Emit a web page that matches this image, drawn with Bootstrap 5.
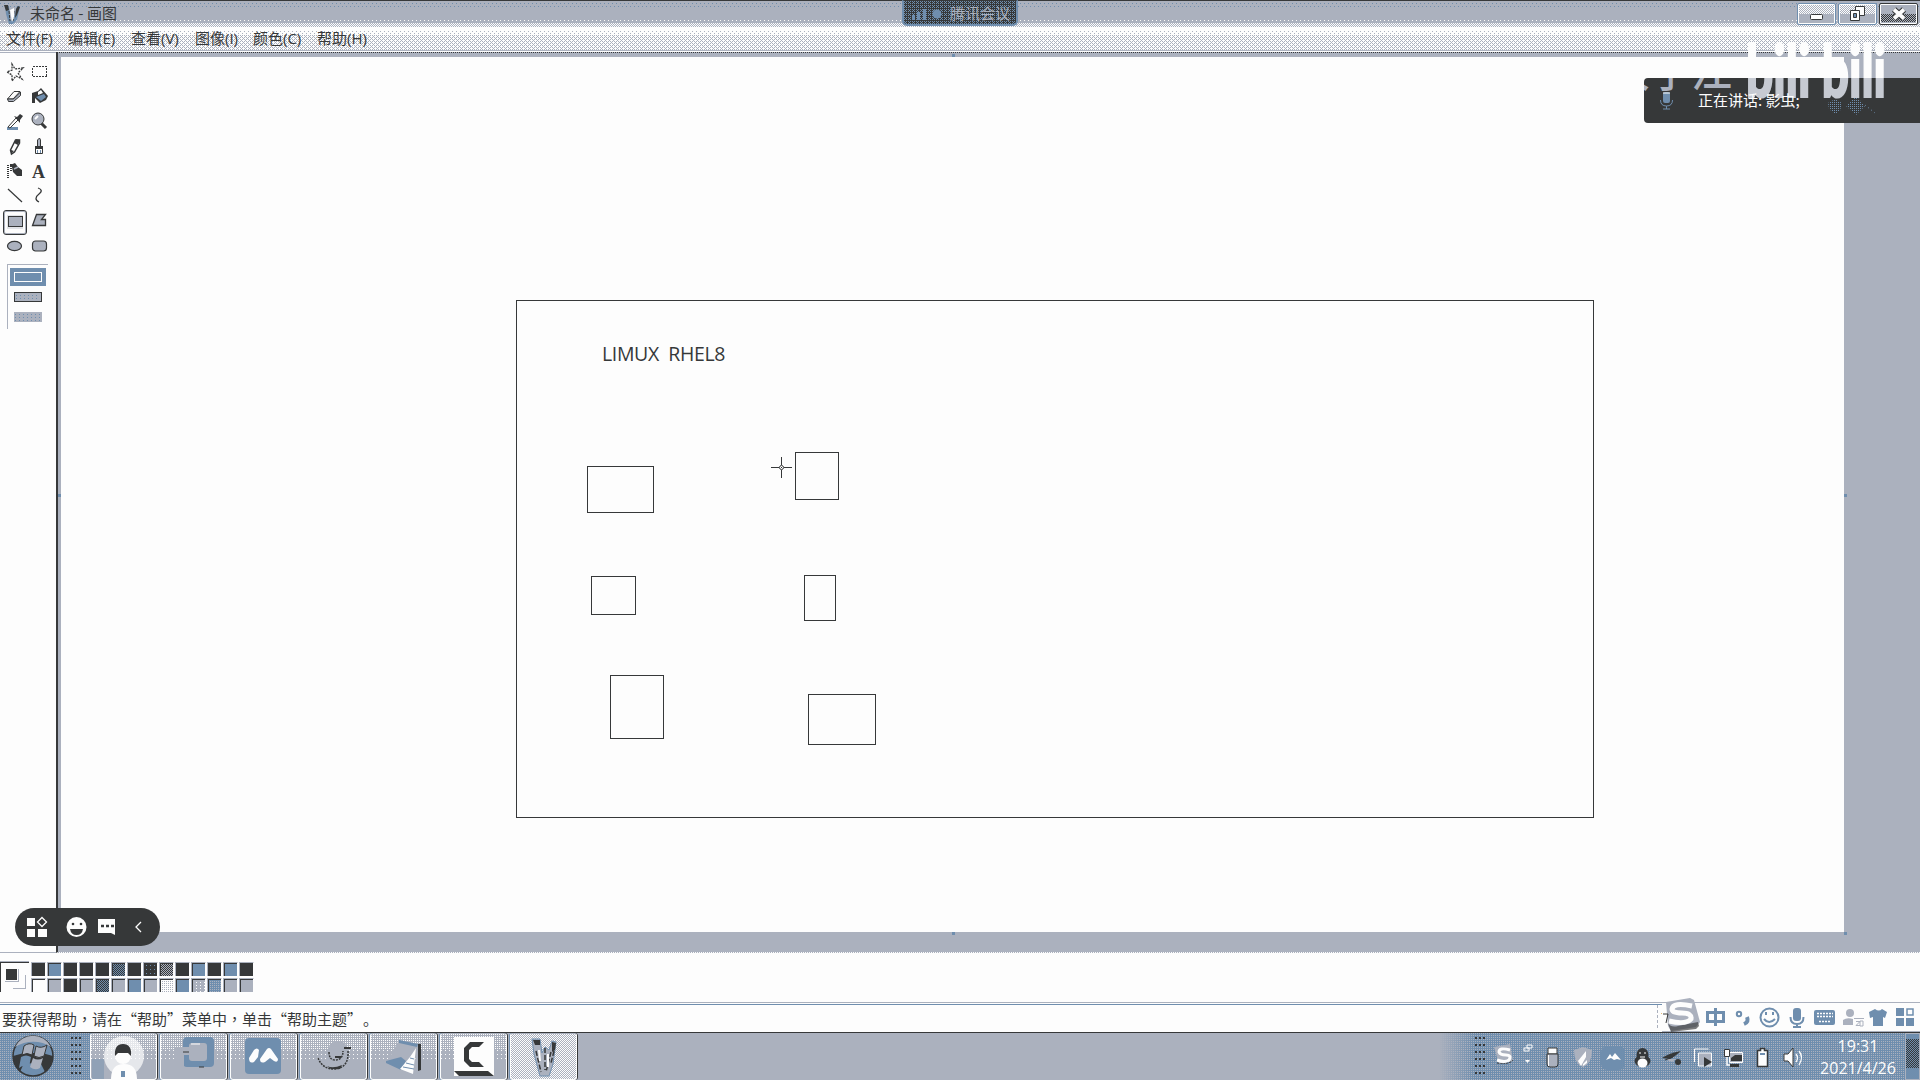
<!DOCTYPE html>
<html lang="zh-CN">
<head>
<meta charset="utf-8">
<title>未命名 - 画图</title>
<meta name="viewport" content="width=device-width, initial-scale=1">
<link href="https://cdn.jsdelivr.net/npm/bootstrap@5.3.0/dist/css/bootstrap.min.css" rel="stylesheet">
<style>
:root{--k:#363839;--b:#6f8eae;--g:#abb1be;--w:#fdfdfd}
body{width:1920px;height:1080px;overflow:hidden;background:var(--w);color:var(--k);font-family:"Noto Sans CJK SC","Noto Sans",sans-serif;font-size:15px;line-height:1}
svg{display:block;flex:none}
.crisp{shape-rendering:crispEdges}
.titlebar{height:27px;border-top:1px solid var(--k);background:
 conic-gradient(at 1px 1px,transparent 75%,var(--b) 0) 0 2px/4px 4px repeat-x,
 conic-gradient(at 1px 1px,transparent 75%,var(--b) 0) 2px 5px/4px 4px repeat-x,
 conic-gradient(at 1px 1px,transparent 75%,var(--w) 0) 0 19px/4px 3px repeat-x,
 repeating-conic-gradient(var(--w) 0 25%,var(--g) 0 50%) 0 22px/2px 2px repeat-x,
 repeating-conic-gradient(var(--w) 0 25%,var(--g) 0 50%) 0 24px/2px 2px repeat-x,var(--g)}
.titlebar .caption{margin-left:9px;padding-bottom:3px}
.winbtn{width:39px;height:22px;border:1px solid var(--b);border-radius:2px;box-shadow:inset 0 0 0 1px var(--w);background:linear-gradient(transparent 10px,var(--g) 0),repeating-conic-gradient(var(--w) 0 25%,var(--g) 0 50%) 0 0/2px 2px}
.winclose{border-color:var(--k);background:linear-gradient(var(--g) 10px,transparent 0 18px,var(--g) 0),repeating-conic-gradient(var(--k) 0 25%,var(--g) 0 50%) 0 0/2px 2px}
.menubar{height:24px;padding-left:6px;border-bottom:1px solid var(--g);font-family:"Open Sans","Noto Sans CJK SC",sans-serif;background:
 linear-gradient(var(--w) 4px,transparent 0),
 conic-gradient(at 1px 1px,transparent 75%,var(--g) 0) 0 0/4px 4px,
 conic-gradient(at 1px 1px,transparent 75%,var(--g) 0) 2px 2px/4px 4px,
 linear-gradient(var(--w) 8px,transparent 0),
 conic-gradient(at 1px 1px,transparent 75%,var(--g) 0) 2px 0/4px 4px,
 conic-gradient(at 1px 1px,transparent 75%,var(--g) 0) 0 2px/4px 4px,
 conic-gradient(at 1px 1px,transparent 75%,var(--g) 0) 1px 1px/4px 4px,
 conic-gradient(at 1px 1px,transparent 75%,var(--g) 0) 3px 3px/4px 4px,var(--w)}
.menubar span{display:block;white-space:nowrap}
.meet{left:902px;top:0;width:116px;height:26px;border:2px solid var(--b);border-top:1px solid var(--k);border-radius:0 0 5px 5px;color:var(--g);background:conic-gradient(at 1px 1px,transparent 75%,var(--b) 0) 0 0/2px 2px,conic-gradient(at 1px 1px,transparent 75%,var(--b) 0) 1px 1px/4px 4px,var(--k)}
.main{height:902px;border-top:1px solid var(--w)}
.toolside{width:56px;border-top:1px solid var(--g);border-bottom:1px solid var(--g);padding:8px 0 0 3px}
.toolgrid{width:48px}
.tool{width:24px;height:24.9px}
.picked{border:1px solid var(--k);border-radius:3px;box-shadow:inset 0 0 0 1px var(--g)}
.shapeopts{width:41px;height:65px;margin:4px 0 0 4px;border-top:1px solid var(--g);border-left:1px solid var(--g)}
.work{background:var(--g);border-left:2px solid var(--k);border-top:1px dotted var(--k);padding:4px 0 0 3px;border-bottom:1px dotted var(--w)}
.sheet{width:1783px;height:875px;background:var(--w)}
.shape{border:1px solid var(--k)}
.grip{width:3px;height:3px;background:var(--b)}
.word{font:19.5px "Open Sans",sans-serif;line-height:1;white-space:pre;left:541px;top:287px;letter-spacing:-.35px}
.palette{height:49px;padding-top:9px}
.curcol{width:29px;height:30px;border:1px solid var(--k);border-right:0;border-bottom:0;box-shadow:0 -1px var(--g)}
.swatches{display:grid;grid-template-columns:repeat(14,16px);grid-auto-rows:16px;margin-left:2px}
.sw{width:15px;height:14px;border:1px solid var(--g);border-right-color:var(--w);border-bottom:0;box-shadow:inset 1px 1px var(--k)}
.k{background:var(--k)}.b{background:var(--b)}.g{background:var(--g)}.w{background:var(--w)}
.kb{background:repeating-conic-gradient(var(--k) 0 25%,var(--b) 0 50%) 0 0/2px 2px}
.kg{background:repeating-conic-gradient(var(--k) 0 25%,var(--g) 0 50%) 0 0/2px 2px}
.bk{background:conic-gradient(at 1px 1px,transparent 75%,var(--b) 0) 2px 2px/4px 4px,var(--k)}
.gw{background:conic-gradient(at 1px 1px,transparent 75%,var(--g) 0) 0 0/2px 2px,var(--w)}
.wg{background:conic-gradient(at 1px 1px,transparent 75%,var(--w) 0) 0 0/4px 3px,var(--g)}
.gb{background:conic-gradient(at 1px 1px,transparent 75%,var(--g) 0) 0 0/2px 2px,var(--b)}
.status{height:30px;border-top:1px solid var(--g);padding:1px 0 0 2px;box-shadow:inset 0 1px var(--w),inset 0 2px var(--b);white-space:nowrap}
.mid{font-family:"Noto Sans CJK TC",sans-serif}
.ime{right:0;top:1002px;width:258px;height:30px;background:var(--w);border-top:1px solid var(--g);border-bottom:1px solid var(--g)}
.taskbar{height:48px;border-top:1px solid var(--k);background:var(--g)}
.fabric{background:conic-gradient(at 1px 1px,transparent 75%,var(--g) 0) 0 0/2px 2px,var(--b)}
.startzone{width:90px}
.dots{width:11px;height:39px;background:conic-gradient(at 3px 2px,transparent 75%,var(--k) 0) 0 0/4px 7px}
.startzone .dots,.tray .dots{background:conic-gradient(at 2px 2px,transparent 75%,var(--k) 0) 0 0/4px 7px}
.task{width:67px;height:47px;margin-right:3px;border:1px solid var(--w);border-top-color:var(--g);border-radius:3px;box-shadow:1px 0 var(--k),-1px 0 var(--b);background:
 linear-gradient(var(--g),var(--g)) 0 28px/100% 20px no-repeat,
 conic-gradient(at 1px 1px,transparent 75%,var(--w) 0) 0 0/4px 4px,
 linear-gradient(var(--g),var(--g)) 0 16px/100% 30px no-repeat,
 conic-gradient(at 1px 1px,transparent 75%,var(--w) 0) 0 0/2px 2px,var(--g)}
.active-task{background:repeating-conic-gradient(var(--w) 0 25%,var(--g) 0 50%) 0 0/2px 2px}
.fade-in{width:36px;background:linear-gradient(90deg,var(--g),transparent),conic-gradient(at 1px 1px,transparent 75%,var(--g) 0) 0 0/2px 2px,var(--b)}
.tray{width:445px}
.clock{font:16px "Open Sans",sans-serif;line-height:22px;color:var(--w);width:90px;text-align:center}
.desk{width:15px;border:1px solid var(--g);background:linear-gradient(var(--b) 5px,transparent 0 34px,var(--b) 0),repeating-conic-gradient(var(--k) 0 25%,var(--b) 0 50%) 0 0/2px 2px}
.dock{left:15px;top:908px;width:145px;height:38px;border-radius:19px;background:var(--k)}
.speaking{left:1644px;top:78px;width:276px;height:45px;border-radius:4px 0 0 4px;background:var(--k);color:var(--w);overflow:hidden}
.say{left:1698px;top:92px;white-space:nowrap;font-size:15px;color:var(--w)}
.wm{font-family:"Lato","Noto Sans CJK SC",sans-serif;font-weight:900}
</style>
<script src="https://cdn.jsdelivr.net/npm/bootstrap@5.3.0/dist/js/bootstrap.bundle.min.js"></script>
</head>
<body class="d-flex flex-column position-relative">

<!-- Title bar -->
<header class="titlebar d-flex align-items-center flex-shrink-0">
  <svg width="21" height="24" viewBox="0 0 21 24"><path d="M5 3l4 1 1 14 3 1 4-15h3l-3 14-4 4H9L6 12z" fill="#6f8eae"/><path d="M4 3h4l1 5-3 1zM18 4l2 1-3 8-2 3 1-9z" fill="#363839"/><path d="M9 9l1 10M14 9l-1 10" stroke="#363839" stroke-dasharray="3 1"/><path d="M10 8l4-2v9l-2 5z" fill="#fdfdfd"/></svg>
  <span class="caption">未命名 - 画图</span>
  <div class="ms-auto d-flex" style="gap:2px;margin-right:2px">
    <div class="winbtn"><svg width="37" height="20"><rect x="12.5" y="10.5" width="12" height="5" rx="1" fill="#fdfdfd" stroke="#363839"/></svg></div>
    <div class="winbtn"><svg width="37" height="20"><path d="M16.500 2.500h9v9h-9z" fill="#fdfdfd" stroke="#363839"/><path d="M11.500 6.500h9v10h-9z" fill="#fdfdfd" stroke="#363839"/><path d="M14.500 9.500h3v4h-3z" fill="#6f8eae" stroke="#363839"/></svg></div>
    <div class="winbtn winclose"><svg width="37" height="20"><path d="M14 5.500l10 9M24 5.500l-10 9" stroke="#363839" stroke-width="6"/><path d="M14 5.500l10 9M24 5.500l-10 9" stroke="#fdfdfd" stroke-width="3.800"/></svg></div>
  </div>
</header>

<!-- Menu bar -->
<nav class="menubar d-flex align-items-center flex-shrink-0">
  <span style="width:62px">文件(F)</span><span style="width:63px">编辑(E)</span><span style="width:64px">查看(V)</span><span style="width:58px">图像(I)</span><span style="width:64px">颜色(C)</span><span>帮助(H)</span>
</nav>

<main class="main d-flex flex-shrink-0">
  <!-- Tool box -->
  <aside class="toolside flex-shrink-0">
    <div class="toolgrid d-flex flex-wrap">
      <div class="tool"><svg width="24" height="24"><path d="M9 3l3 5 8-1-5 5 4 6-6-3-4 5v-6l-5-3 5-2z" fill="none" stroke="#363839" stroke-width="1.300" stroke-dasharray="2 1"/></svg></div>
      <div class="tool"><svg class="crisp" width="24" height="24"><path d="M5.500 5.500h14v10h-14z" fill="none" stroke="#363839" stroke-dasharray="2 1"/></svg></div>
      <div class="tool"><svg width="24" height="24"><path d="M4.500 13L11 5.500h6L10 13z" fill="#fdfdfd" stroke="#363839"/><path d="M4.500 13h6L17.500 6v3.500l-7 6h-5z" fill="#abb1be" stroke="#363839"/></svg></div>
      <div class="tool"><svg width="24" height="24"><path d="M5 17V7l6-2 3-3 7 8-2 4-6 3-5-5v5z" fill="#363839"/><path d="M9 11l8-3 2 3-5 4z" fill="#6f8eae"/><path d="M11 6l3-2 2 3-5 2z" fill="#fdfdfd"/></svg></div>
      <div class="tool"><svg width="24" height="24"><path d="M4 19h11v-3H4z" fill="#6f8eae"/><path d="M5 16l8-9 2 2-8 8z" fill="#fdfdfd" stroke="#363839"/><path d="M11 5l3 1 3-3 3 2-3 4v3z" fill="#363839"/></svg></div>
      <div class="tool"><svg width="24" height="24"><path d="M14 12l5 5" stroke="#363839" stroke-width="3"/><circle cx="11" cy="8" r="6" fill="#abb1be" stroke="#363839"/><path d="M8 8l3-3" stroke="#fdfdfd" stroke-width="2"/></svg></div>
      <div class="tool"><svg width="24" height="24"><path d="M8.500 18l-1-4 5-10h4v3l-5 9z" fill="#fdfdfd" stroke="#363839" stroke-width="1.500"/><path d="M13 3l4 1-2 5-4-2zM8 18v-4l3 1z" fill="#363839"/></svg></div>
      <div class="tool"><svg width="24" height="24"><path d="M10.500 10V4l2-2 1 2v6" fill="#abb1be" stroke="#363839"/><path d="M8.500 10.500h7v7h-7z" fill="#fdfdfd" stroke="#363839"/><path d="M8 10h8v3H8z" fill="#363839"/><path d="M10.500 14v3m3-3v3" stroke="#6f8eae"/></svg></div>
      <div class="tool"><svg width="24" height="24"><path d="M5 4v13M8 3v7" stroke="#363839" stroke-width="2" stroke-dasharray="1 1"/><path d="M7 4l5-2 3 4 4 3v6h-5l-4-4-1-5H7z" fill="#363839"/><path d="M11 8l4-2" stroke="#abb1be" stroke-width="1.500"/></svg></div>
      <div class="tool"><svg width="24" height="24"><text x="5" y="16.500" font-family="Liberation Serif" font-weight="bold" font-size="18" fill="#363839">A</text></svg></div>
      <div class="tool"><svg width="24" height="24"><path d="M5 4l14 13" stroke="#363839" stroke-width="1.200"/></svg></div>
      <div class="tool"><svg width="24" height="24"><path d="M11 3c3 1 5 3 1 6s-4 6 0 8" fill="none" stroke="#363839" stroke-width="1.300"/></svg></div>
      <div class="tool picked"><svg class="crisp" width="22" height="22"><path d="M3 4h16v14H3z" fill="#abb1be" fill-opacity=".35"/><path d="M4.500 5.500h14v10h-14z" fill="#abb1be" stroke="#363839"/></svg></div>
      <div class="tool"><svg width="24" height="24"><path d="M9.500 4.500h9l-4 5h4v6H5.500z" fill="#abb1be" stroke="#363839" stroke-width="1.300"/></svg></div>
      <div class="tool"><svg width="24" height="24"><ellipse cx="11.500" cy="11" rx="7" ry="4.700" fill="#abb1be" stroke="#363839" stroke-width="1.200"/></svg></div>
      <div class="tool"><svg width="24" height="24"><rect x="5.500" y="6" width="14" height="10" rx="3" fill="#abb1be" stroke="#363839" stroke-width="1.200"/></svg></div>
    </div>
    <div class="shapeopts"><svg class="crisp" width="40" height="62"><path d="M2 3h36v18H2z" fill="#6f8eae"/><path d="M6.500 7.500h27v9h-27z" fill="none" stroke="#fdfdfd"/><path d="M6.500 27.500h27v9h-27z" fill="#abb1be" stroke="#363839"/><path d="M6 47h28v10H6z" fill="#abb1be"/><path d="M8 30.500h24M8 33.500h24M7 49.500h26M7 52.500h26M7 55.500h26" stroke="#6f8eae" stroke-dasharray="1 3"/></svg></div>
  </aside>

  <!-- Drawing surface -->
  <section class="work flex-grow-1">
    <div class="sheet position-relative">
      <div class="shape position-absolute" style="left:455px;top:243px;width:1078px;height:518px"></div>
      <div class="word position-absolute">LIMUX  RHEL8</div>
      <div class="shape position-absolute" style="left:526px;top:409px;width:67px;height:47px"></div>
      <div class="shape position-absolute" style="left:734px;top:395px;width:44px;height:48px"></div>
      <div class="shape position-absolute" style="left:530px;top:519px;width:45px;height:39px"></div>
      <div class="shape position-absolute" style="left:743px;top:518px;width:32px;height:46px"></div>
      <div class="shape position-absolute" style="left:549px;top:618px;width:54px;height:64px"></div>
      <div class="shape position-absolute" style="left:747px;top:637px;width:68px;height:51px"></div>
      <svg class="position-absolute" style="left:710px;top:400px" width="21" height="21"><path d="M10.500 0v8m0 5v8M0 10.500h8m5 0h8" stroke="#363839"/><circle cx="10.500" cy="10.500" r="2" fill="none" stroke="#363839"/><path d="M10 10h1v1h-1z" fill="#363839"/></svg>
      <i class="grip position-absolute" style="left:1783px;top:875px"></i><i class="grip position-absolute" style="left:1783px;top:437px"></i><i class="grip position-absolute" style="left:891px;top:875px"></i><i class="grip position-absolute" style="left:891px;top:-3px"></i><i class="grip position-absolute" style="left:-3px;top:437px"></i>
    </div>
  </section>
</main>

<!-- Colour box -->
<section class="palette d-flex flex-shrink-0">
  <div class="curcol"><svg class="crisp" width="28" height="29"><path d="M11.500 25.500h13v-14M4 18.500h13.500v-13" fill="none" stroke="#abb1be"/><path d="M5 6h11v11H5z" fill="#363839"/></svg></div>
  <div class="swatches">
    <i class="sw k"></i><i class="sw b"></i><i class="sw k"></i><i class="sw k"></i><i class="sw k"></i><i class="sw kb"></i><i class="sw k"></i><i class="sw bk"></i><i class="sw kg"></i><i class="sw k"></i><i class="sw b"></i><i class="sw k"></i><i class="sw b"></i><i class="sw k"></i>
    <i class="sw w"></i><i class="sw g"></i><i class="sw k"></i><i class="sw g"></i><i class="sw kb"></i><i class="sw g"></i><i class="sw b"></i><i class="sw g"></i><i class="sw gw"></i><i class="sw b"></i><i class="sw wg"></i><i class="sw gb"></i><i class="sw g"></i><i class="sw g"></i>
  </div>
</section>

<footer class="status d-flex align-items-center flex-shrink-0">
  <span>要获得帮助<span class="mid" lang="zh-TW">，</span>请在“帮助”菜单中<span class="mid" lang="zh-TW">，</span>单击“帮助主题”&hairsp;。</span>
  <svg class="ms-auto" style="margin-right:251px" width="14" height="26"><path d="M2.500 0v24" stroke="#abb1be" stroke-dasharray="3 2"/><text x="6" y="19" font-size="14" fill="#363839">7</text></svg>
</footer>

<!-- Task bar -->
<div class="taskbar d-flex flex-shrink-0">
  <div class="startzone fabric d-flex align-items-center">
    <svg class="ms-2" style="padding-left:4px;box-sizing:content-box" width="44" height="45" viewBox="0 0 44 45"><circle cx="21" cy="22" r="20" fill="#6f8eae" stroke="#363839" stroke-width="1.500"/><path d="M3 13a20 20 0 0 1 36 0c-10-7-25-7-36 0" fill="#abb1be"/><path d="M1 22l11-3 18 0 11 3q-1 11-8 16l-4-8-17-1-4 9Q1 31 1 22" fill="#363839"/><path d="M12 12q5-4 10-1l-2 10q-5-3-10 0zM24 12q5 3 11-1l-3 11q-5 3-10 0z" fill="#abb1be" stroke="#363839"/><path d="M9 23q5-3 10 0l-2 10q-5-3-10 1z" fill="#6f8eae"/><path d="M21 24q5 3 10 0l-3 10q-5 3-10-1z" fill="#abb1be"/></svg>
    <div class="dots" style="margin-left:15px"></div>
  </div>
  <div class="task"><svg width="65" height="45"><path d="M1 25h12v20H1z" fill="#6f8eae" fill-opacity=".45"/><circle cx="33" cy="22" r="20" fill="#fdfdfd" fill-opacity=".7"/><path d="M20 45q0-15 13-15t13 15z" fill="#fdfdfd"/><circle cx="32" cy="22" r="8" fill="#fdfdfd"/><path d="M24 22q-1-12 8-12t8 12l-3-3H27z" fill="#363839"/><path d="M30 37h4v6h-4z" fill="#6f8eae"/></svg></div>
  <div class="task"><svg width="65" height="45"><rect x="22" y="3" width="31" height="30" rx="4" fill="#6f8eae"/><rect x="28" y="9" width="18" height="18" rx="3" fill="#abb1be"/><path d="M13 13h17v8h-7v12H13z" fill="#abb1be"/><path d="M30 10h9" stroke="#fdfdfd"/><path d="M22 18h6m10 15h5" stroke="#363839"/></svg></div>
  <div class="task"><svg width="65" height="45"><rect x="14" y="4" width="36" height="36" rx="4" fill="#6f8eae"/><path d="M18 24l5-8q3-3 5 0l-1 7-4 5q-5 2-5-4M29 25l7-10q2-2 4 0l7 10q0 4-4 2l-4-3-5 4q-5 2-5-3" fill="#fdfdfd"/></svg></div>
  <div class="task"><svg width="65" height="45"><path d="M27 16q2-9 10-9 7 0 9 6l4 1-3 3q1 18-14 19-12-1-15-12 5 4 9 1z" fill="#abb1be"/><path d="M17 24q5 12 18 11 13-2 12-18M28 18q0 8 6 8 8 0 8-9" fill="none" stroke="#363839" stroke-width="1.500" stroke-dasharray="2 1"/><path d="M26 32q6 3 15-1l-2 4H30z" fill="#363839"/><path d="M43 13h7v2h-7zM34 22h6v2h-6z" fill="#363839"/></svg></div>
  <div class="task"><svg width="65" height="45"><path d="M28 6l20 4-7 29-26-9z" fill="#abb1be"/><path d="M28 6l19 4-1 3-18-4zM15 27l15-4 5 4-5 9-15-7z" fill="#6f8eae"/><path d="M47 10h3v26l-3 1z" fill="#363839"/><path d="M45 14l-3 26-13-5 10-12z" fill="#fdfdfd"/><path d="M32 33l11 2M35 29l8 2M39 24l4 1" stroke="#6f8eae"/></svg></div>
  <div class="task"><svg width="65" height="45"><path d="M13 3h40v39H13z" fill="#fdfdfd"/><path d="M43 8H29l-6 6v13l6 6h14l-5-5h-7l-3-3v-9l3-3h7z" fill="#363839"/><path d="M13 37h34l6 5H18z" fill="#363839"/></svg></div>
  <div class="task active-task"><svg width="65" height="45"><path d="M21 5h8l2 14 3-6 4 3 3-9 4 1-3 22-4 12H29l-6-22z" fill="#abb1be" stroke="#6f8eae"/><path d="M22 6h7v5h-5zM41 8l4 1-1 7-3 2z" fill="#363839"/><path d="M25 17l5 21M34 14v22M40 18l-5 20M43 17l-3 12" stroke="#363839" stroke-width="1.500" stroke-dasharray="5 2"/><path d="M28 16l1 11M37 20v13" stroke="#fdfdfd" stroke-width="2"/></svg></div>
  <div class="fade-in ms-auto"></div>
  <div class="tray fabric d-flex align-items-center">
    <div class="dots"></div>
    <svg width="324" height="46" viewBox="1486 1033 324 46" fill="none">
      <path d="M1494 1046l16-3 3 17-14 3z" fill="#abb1be"/><path d="M1510 1049q-11-3-11 2 1 3 7 3t3 5q-4 3-12 0" stroke="#fdfdfd" stroke-width="3"/><path d="M1497 1062q12 2 16-3" stroke="#363839" stroke-dasharray="2 1"/>
      <path d="M1527 1044h5v3h-5zM1524 1047h5v3h-5z" stroke="#fdfdfd"/><path d="M1525 1059h5l-2.500 3z" fill="#fdfdfd"/>
      <path d="M1548 1047h9v6h-9z" fill="#fdfdfd" stroke="#363839"/><path d="M1547 1053h11v10q0 3-3 3h-5q-3 0-3-3z" fill="#abb1be" stroke="#363839"/><path d="M1548.500 1054v11" stroke="#fdfdfd"/>
      <path d="M1574 1049l9-3 9 3q0 14-9 17-9-3-9-17" fill="#abb1be"/><path d="M1578 1060l8-10v6l-5 9zM1583 1063l4-4v3l-4 3z" fill="#fdfdfd"/>
      <rect x="1601" y="1045" width="24" height="24" rx="6" fill="#6f8eae"/><path d="M1606 1059l4-6 2 3 3-4 6 7-4-1-3 1-3-2z" fill="#fdfdfd"/>
      <ellipse cx="1642.500" cy="1054" rx="6" ry="7" fill="#363839"/><ellipse cx="1642.500" cy="1060" rx="8" ry="6" fill="#363839"/><ellipse cx="1642.500" cy="1062" rx="5" ry="4.500" fill="#fdfdfd"/><path d="M1639 1052h2m3 0h2M1640 1056h5" stroke="#fdfdfd"/>
      <path d="M1662 1057q7-5 19-7l-6 5-5 3z" fill="#363839"/><path d="M1664 1058h12l-4 3z" fill="#abb1be"/><path d="M1665 1059l8-3" stroke="#363839"/><circle cx="1678" cy="1061" r="3" fill="#363839"/>
      <path d="M1694.500 1061v-13h14" stroke="#fdfdfd"/><path d="M1698.500 1065v-13h13v13z" fill="#abb1be" stroke="#fdfdfd"/><path d="M1704 1056v10l8-5z" fill="#363839"/>
      <path d="M1729.500 1051.500h13v10h-13z" fill="#abb1be" stroke="#fdfdfd"/><path d="M1731 1060v-3l4-3h7v6z" fill="#363839"/><path d="M1724.500 1048.500h5v7h-5z" fill="#fdfdfd" stroke="#363839"/><path d="M1727 1056v8h6" stroke="#fdfdfd" stroke-width="1.500"/><path d="M1730 1064.500h9" stroke="#363839" stroke-width="3"/>
      <path d="M1757.500 1049.500h3v-2h4v2h3v16h-10z" fill="#fdfdfd" stroke="#363839" stroke-width="1.500"/><path d="M1760 1052h5v2h-5z" fill="#6f8eae"/>
      <path d="M1784 1053h4l5-6v19l-5-6h-4z" fill="#fdfdfd" stroke="#363839"/><path d="M1796 1053q3 4 0 8M1799 1050q5 6 0 14" stroke="#fdfdfd" stroke-width="1.300"/>
    </svg>
    <div class="clock" style="margin-left:3px">19:31<br>2021/4/26</div>
    <div class="desk ms-auto align-self-stretch"></div>
  </div>
</div>

<!-- Meeting tab over the title bar -->
<div class="meet position-absolute d-flex align-items-center">
  <svg width="46" height="22"><path d="M8 18v-5h3v5zM13 18v-8h3v8zM19 18V7h3v11z" fill="#6f8eae"/><circle cx="33" cy="12" r="4.500" fill="#6f8eae"/></svg><span>腾讯会议</span>
</div>

<!-- Speaking panel -->
<div class="speaking position-absolute">
  <svg class="wm" width="276" height="45">
    <text x="-35" y="9" font-size="41" style="font-weight:500" fill="#abb1be">大子江</text>
    <rect x="19" y="14" width="7" height="11" rx="2" fill="#6f8eae"/><path d="M19 15h7" stroke="#fdfdfd"/><path d="M16.500 22q0 6 6 6t6-6M22.500 28v3M19 31h7" fill="none" stroke="#6f8eae"/>
    <defs><pattern id="bluegrain" width="2" height="2" patternUnits="userSpaceOnUse"><path d="M0 0h1v1H0z" fill="#6f8eae"/></pattern></defs>
    <path d="M184 25l7-4 7 4-2 8-5 3-6-5zM202 28l10-10 9 10-9 9z" fill="url(#bluegrain)"/><path d="M221 27l10 8" stroke="#6f8eae" stroke-dasharray="1 3"/>
  </svg>
</div>
<!-- Channel mark -->
<svg class="position-absolute wm" style="left:1640px;top:30px" width="280" height="80">
  <defs><linearGradient id="split" gradientUnits="userSpaceOnUse" x1="0" y1="0" x2="0" y2="80"><stop offset=".6" stop-color="#fdfdfd"/><stop offset=".6" stop-color="#c6cad2"/></linearGradient></defs>
  <text font-size="72" y="67" x="106" fill="url(#split)" stroke="url(#split)" stroke-width="2" textLength="140" lengthAdjust="spacingAndGlyphs">bili bili</text>
</svg>
<div class="say position-absolute">正在讲话: 影虫;</div>

<!-- Floating meeting dock -->
<div class="dock position-absolute">
  <svg width="145" height="38" fill="none"><path d="M12 10h8v8h-8zM12 21h8v8h-8zM23 21h9v8h-9z" fill="#fdfdfd"/><path d="M27 9.500l4.500 4.500-4.500 4.500-4.500-4.500z" stroke="#fdfdfd" stroke-width="1.300"/><circle cx="61.500" cy="19" r="10" fill="#fdfdfd"/><circle cx="58" cy="16" r="1.300" fill="#363839"/><circle cx="66" cy="16" r="1.300" fill="#363839"/><path d="M55 21h13q-1 6-6.500 6T55 21" fill="#363839"/><path d="M83 11h17v16l-4-2H83z" fill="#fdfdfd"/><path d="M86 18h3m2 0h3m2 0h3" stroke="#363839" stroke-width="2.500"/><path d="M126 14l-5 5 5 5" stroke="#fdfdfd" stroke-width="1.300"/></svg>
</div>

<!-- Input method bar -->
<div class="ime position-absolute"></div>
<svg class="position-absolute" style="left:1660px;top:994px" width="260" height="38" viewBox="1660 994 260 38" fill="none">
  <path d="M1666 1002l24-4 4 2 6 22-4 5-25 4-3-5z" fill="#abb1be"/><path d="M1668 1023q3 5 10 3l20-4 1 4-3 3-25 3z" fill="#363839" fill-opacity=".65"/><path d="M1692 1006q-19-4-20 3 0 4 10 4t9 6q-5 6-22 2" stroke="#fdfdfd" stroke-width="5"/><path d="M1663 1014h5l-2 9" stroke="#363839"/>
  <g stroke="#6f8eae" stroke-width="3"><path d="M1707.500 1012.500h16v9h-16zM1715.500 1008v18"/><circle cx="1739" cy="1014" r="2.200" stroke-width="2"/><path d="M1747 1017q2 5-3 7" stroke-width="4"/><circle cx="1769.500" cy="1017.500" r="9" stroke-width="2"/><path d="M1766 1012v3m7-3v3M1764 1019q5 6 11 0" stroke-width="2"/><path d="M1790.500 1017q0 7 6.500 7t6.500-7M1797 1024v3m-4 0h8" stroke-width="2"/></g>
  <rect x="1793" y="1008" width="8" height="13" rx="3" fill="#6f8eae"/>
  <rect x="1814" y="1010" width="21" height="15" rx="2" fill="#6f8eae"/><path d="M1817 1013.500h16M1817 1016.500h16M1819 1021.500h11" stroke="#fdfdfd" stroke-width="1.500" stroke-dasharray="2 1"/>
  <circle cx="1850" cy="1013" r="4" fill="#abb1be"/><path d="M1843 1025v-5q4-3 10-1v6z" fill="#abb1be"/><path d="M1854 1018.500h10M1856 1021.500h4l-4 4h4M1863 1021v5h-3v-5z" stroke="#abb1be"/>
  <path d="M1875 1009q4 3 7 0l5 3-2 6-2-1v9h-10v-9l-3 1-1-6z" fill="#6f8eae"/>
  <path d="M1896 1008h8v8h-8zM1896 1018h8v8h-8zM1906 1018h8v8h-8z" fill="#6f8eae"/><path d="M1907 1009h6v6h-6z" stroke="#6f8eae" stroke-width="1.500"/>
</svg>
</body>
</html>
